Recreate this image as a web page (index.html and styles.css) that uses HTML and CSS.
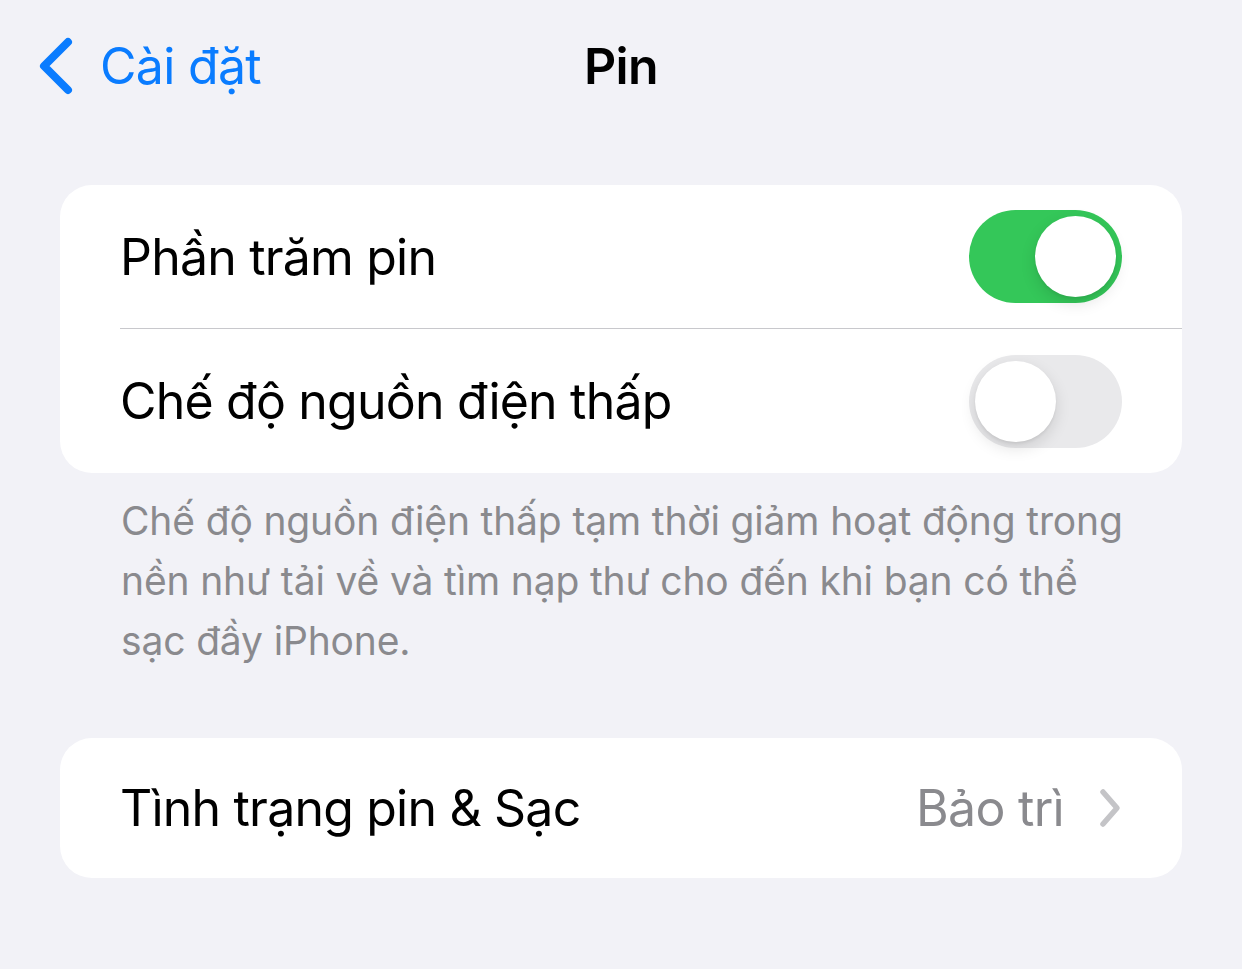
FILE: index.html
```html
<!DOCTYPE html>
<html lang="vi">
<head>
<meta charset="utf-8">
<title>Pin</title>
<link rel="stylesheet" href="styles.css">
</head>
<body>
<div class="screen">
  <header class="navbar">
    <a class="back" href="#">
      <svg class="back-chevron" viewBox="0 0 40 60" aria-hidden="true">
        <polyline points="32,6 8,30 32,54" />
      </svg>
      <span class="back-label">Cài đặt</span>
    </a>
    <h1 class="title">Pin</h1>
    <div class="nav-spacer"></div>
  </header>

  <section class="group">
    <div class="row">
      <div class="row-inner divided">
        <span class="row-label">Phần trăm pin</span>
        <span class="switch on"><span class="knob"></span></span>
      </div>
    </div>
    <div class="row">
      <div class="row-inner">
        <span class="row-label">Chế độ nguồn điện thấp</span>
        <span class="switch"><span class="knob"></span></span>
      </div>
    </div>
  </section>
  <p class="footer-note">
    <span class="line">Chế độ nguồn điện thấp tạm thời giảm hoạt động trong</span>
    <span class="line">nền như tải về và tìm nạp thư cho đến khi bạn có thể</span>
    <span class="line">sạc đầy iPhone.</span>
  </p>

  <section class="group group-single">
    <div class="row">
      <div class="row-inner">
        <span class="row-label">Tình trạng pin &amp; Sạc</span>
        <span class="row-value">Bảo trì</span>
        <svg class="disclosure" viewBox="0 0 24 40" aria-hidden="true">
          <polyline points="5,4 19,20 5,36" />
        </svg>
      </div>
    </div>
  </section>
</div>
</body>
</html>
```

FILE: styles.css
```css
* {
  box-sizing: border-box;
}

html,
body {
  margin: 0;
  padding: 0;
  background: #f2f2f7;
}

body {
  font-family: Inter, "Noto Sans", "DejaVu Sans", sans-serif;
  color: #000;
  -webkit-font-smoothing: antialiased;
}

.screen {
  width: 1242px;
  height: 969px;
  overflow: hidden;
}

/* Navigation bar */
.navbar {
  height: 132px;
  display: grid;
  grid-template-columns: 1fr auto 1fr;
  align-items: center;
}

.back {
  display: flex;
  align-items: center;
  padding-left: 36px;
  color: #0a7cff;
  text-decoration: none;
}

.back-chevron {
  width: 40px;
  height: 60px;
  margin-right: 24px;
  fill: none;
  stroke: #0a7cff;
  stroke-width: 8;
  stroke-linecap: round;
  stroke-linejoin: round;
}

.back-label {
  font-size: 50px;
  letter-spacing: -0.7px;
  line-height: 1;
}

.title {
  margin: 0;
  font-size: 50px;
  font-weight: 600;
  letter-spacing: -0.6px;
  line-height: 1;
}

/* Inset grouped list */
.group {
  margin: 53px 60px 0;
  background: #fff;
  border-radius: 32px;
  overflow: hidden;
}

.group-single {
  margin-top: 67px;
}

.row {
  padding-left: 60px;
}

.row-inner {
  height: 144px;
  display: flex;
  align-items: center;
  padding-right: 60px;
}

.row-inner.divided {
  border-bottom: 1px solid #c8c8cc;
}

.group-single .row-inner {
  height: 140px;
}

.row-label {
  flex: 1;
  font-size: 50px;
  letter-spacing: -0.8px;
  line-height: 1;
}

.row-value {
  font-size: 50px;
  letter-spacing: -0.7px;
  color: #8a8a8e;
  line-height: 1;
  margin-right: 34px;
}

.disclosure {
  width: 24px;
  height: 40px;
  fill: none;
  stroke: #c4c4c7;
  stroke-width: 5.5;
  stroke-linecap: round;
  stroke-linejoin: round;
}

/* Toggle switch */
.switch {
  position: relative;
  width: 153px;
  height: 93px;
  border-radius: 47px;
  background: #e9e9eb;
  flex: none;
}

.switch.on {
  background: #34c759;
}

.knob {
  position: absolute;
  top: 6px;
  left: 6px;
  width: 81px;
  height: 81px;
  border-radius: 50%;
  background: #fff;
  box-shadow: 0 6px 16px rgba(0, 0, 0, 0.12), 0 2px 3px rgba(0, 0, 0, 0.06);
}

.switch.on .knob {
  left: 66px;
}

/* Footer explanation under the first group */
.footer-note {
  margin: 18px 60px 0 121px;
  font-size: 39px;
  line-height: 60px;
  letter-spacing: -0.15px;
  color: #8a8a8e;
}

.footer-note .line {
  display: block;
  white-space: nowrap;
}
```
